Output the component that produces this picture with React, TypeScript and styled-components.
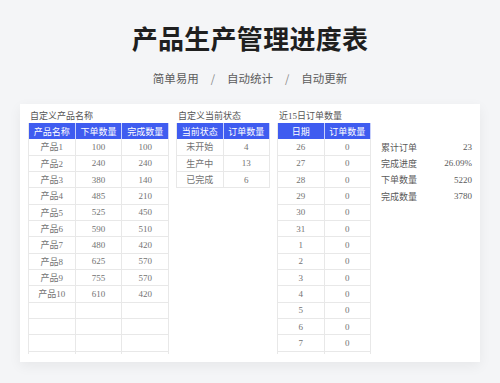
import styled, { createGlobalStyle } from 'styled-components';

const GlobalStyle = createGlobalStyle`
  body {
    margin: 0;
    background: #f4f5f7;
    font-family: "Noto Sans CJK SC", "Noto Sans", sans-serif;
  }
`;

const Page = styled.div`
  width: 500px;
  height: 383px;
  padding-top: 20px;
  box-sizing: border-box;
  display: flex;
  flex-direction: column;
  align-items: center;
  overflow: hidden;
`;

const Title = styled.h1`
  margin: 0;
  font-size: 26px;
  line-height: 36px;
  font-weight: 700;
  color: #1f1f1f;
  letter-spacing: 0.3px;
`;

const Tagline = styled.div`
  margin-top: 13px;
  display: flex;
  align-items: center;
  gap: 12px;
  font-size: 11.5px;
  line-height: 18px;
  color: #5c5c5c;

  .sep {
    color: #888;
    font-size: 11px;
  }
`;

const Card = styled.div`
  margin-top: 17px;
  width: 460px;
  height: 258px;
  box-sizing: border-box;
  background: #fff;
  box-shadow: 0 4px 12px rgba(0, 0, 0, 0.06);
  padding: 5px 8px 8px;
  display: flex;
  font-family: "Liberation Serif", "Noto Sans CJK SC", serif;
`;

const Column = styled.div<{ $width: number; $gap?: number }>`
  width: ${(p) => p.$width}px;
  margin-right: ${(p) => p.$gap ?? 0}px;
  display: flex;
  flex-direction: column;
`;

const Caption = styled.div`
  height: 14px;
  line-height: 14px;
  font-size: 9px;
  color: #555;
  padding-left: 2px;
  white-space: nowrap;
`;

const Grid = styled.div<{ $cols: number }>`
  display: grid;
  grid-template-columns: repeat(${(p) => p.$cols}, 1fr);
  grid-auto-rows: 16.33px;
  max-height: 231px;
  overflow: hidden;
  border-left: 1px solid #e8e8e8;
`;

const HeadCell = styled.div`
  background: #3f5cf0;
  color: #fff;
  font-size: 9px;
  display: flex;
  align-items: center;
  justify-content: center;
  border-right: 1px solid #c9d1fb;
  white-space: nowrap;

  &:last-of-type {
    border-right-color: #3f5cf0;
  }
`;

const Cell = styled.div`
  box-sizing: border-box;
  border-right: 1px solid #e8e8e8;
  border-bottom: 1px solid #e8e8e8;
  font-size: 9px;
  color: #737373;
  display: flex;
  align-items: center;
  justify-content: center;
  white-space: nowrap;
`;

const Stats = styled.div`
  padding-top: 30px;
  display: flex;
  flex-direction: column;
`;

const StatRow = styled.div`
  height: 16.33px;
  display: flex;
  align-items: center;
  justify-content: space-between;
  font-size: 9px;
  color: #5a5a5a;
  padding-left: 1px;
`;

type Row = string[];

function Table({ caption, head, rows, fill }: { caption: string; head: string[]; rows: Row[]; fill: number }) {
  const blanks: Row[] = Array.from({ length: fill }, () => head.map(() => ''));
  return (
    <>
      <Caption>{caption}</Caption>
      <Grid $cols={head.length}>
        {head.map((h) => (
          <HeadCell key={h}>{h}</HeadCell>
        ))}
        {[...rows, ...blanks].map((r, i) => r.map((c, j) => <Cell key={`${i}-${j}`}>{c}</Cell>))}
      </Grid>
    </>
  );
}

const products: Row[] = [
  ['产品1', '100', '100'],
  ['产品2', '240', '240'],
  ['产品3', '380', '140'],
  ['产品4', '485', '210'],
  ['产品5', '525', '450'],
  ['产品6', '590', '510'],
  ['产品7', '480', '420'],
  ['产品8', '625', '570'],
  ['产品9', '755', '570'],
  ['产品10', '610', '420'],
];

const states: Row[] = [
  ['未开始', '4'],
  ['生产中', '13'],
  ['已完成', '6'],
];

const days: Row[] = ['26', '27', '28', '29', '30', '31', '1', '2', '3', '4', '5', '6', '7'].map((d) => [d, '0']);

const stats = [
  ['累计订单', '23'],
  ['完成进度', '26.09%'],
  ['下单数量', '5220'],
  ['完成数量', '3780'],
];

export default function App() {
  return (
    <>
      <GlobalStyle />
      <Page>
        <Title>产品生产管理进度表</Title>
        <Tagline>
          <span>简单易用</span>
          <span className="sep">/</span>
          <span>自动统计</span>
          <span className="sep">/</span>
          <span>自动更新</span>
        </Tagline>
        <Card>
          <Column $width={141} $gap={7}>
            <Table caption="自定义产品名称" head={['产品名称', '下单数量', '完成数量']} rows={products} fill={4} />
          </Column>
          <Column $width={94} $gap={7}>
            <Table caption="自定义当前状态" head={['当前状态', '订单数量']} rows={states} fill={0} />
          </Column>
          <Column $width={94} $gap={9}>
            <Table caption="近15日订单数量" head={['日期', '订单数量']} rows={days} fill={1} />
          </Column>
          <Column $width={92}>
            <Stats>
              {stats.map(([k, v]) => (
                <StatRow key={k}>
                  <span>{k}</span>
                  <span>{v}</span>
                </StatRow>
              ))}
            </Stats>
          </Column>
        </Card>
      </Page>
    </>
  );
}
